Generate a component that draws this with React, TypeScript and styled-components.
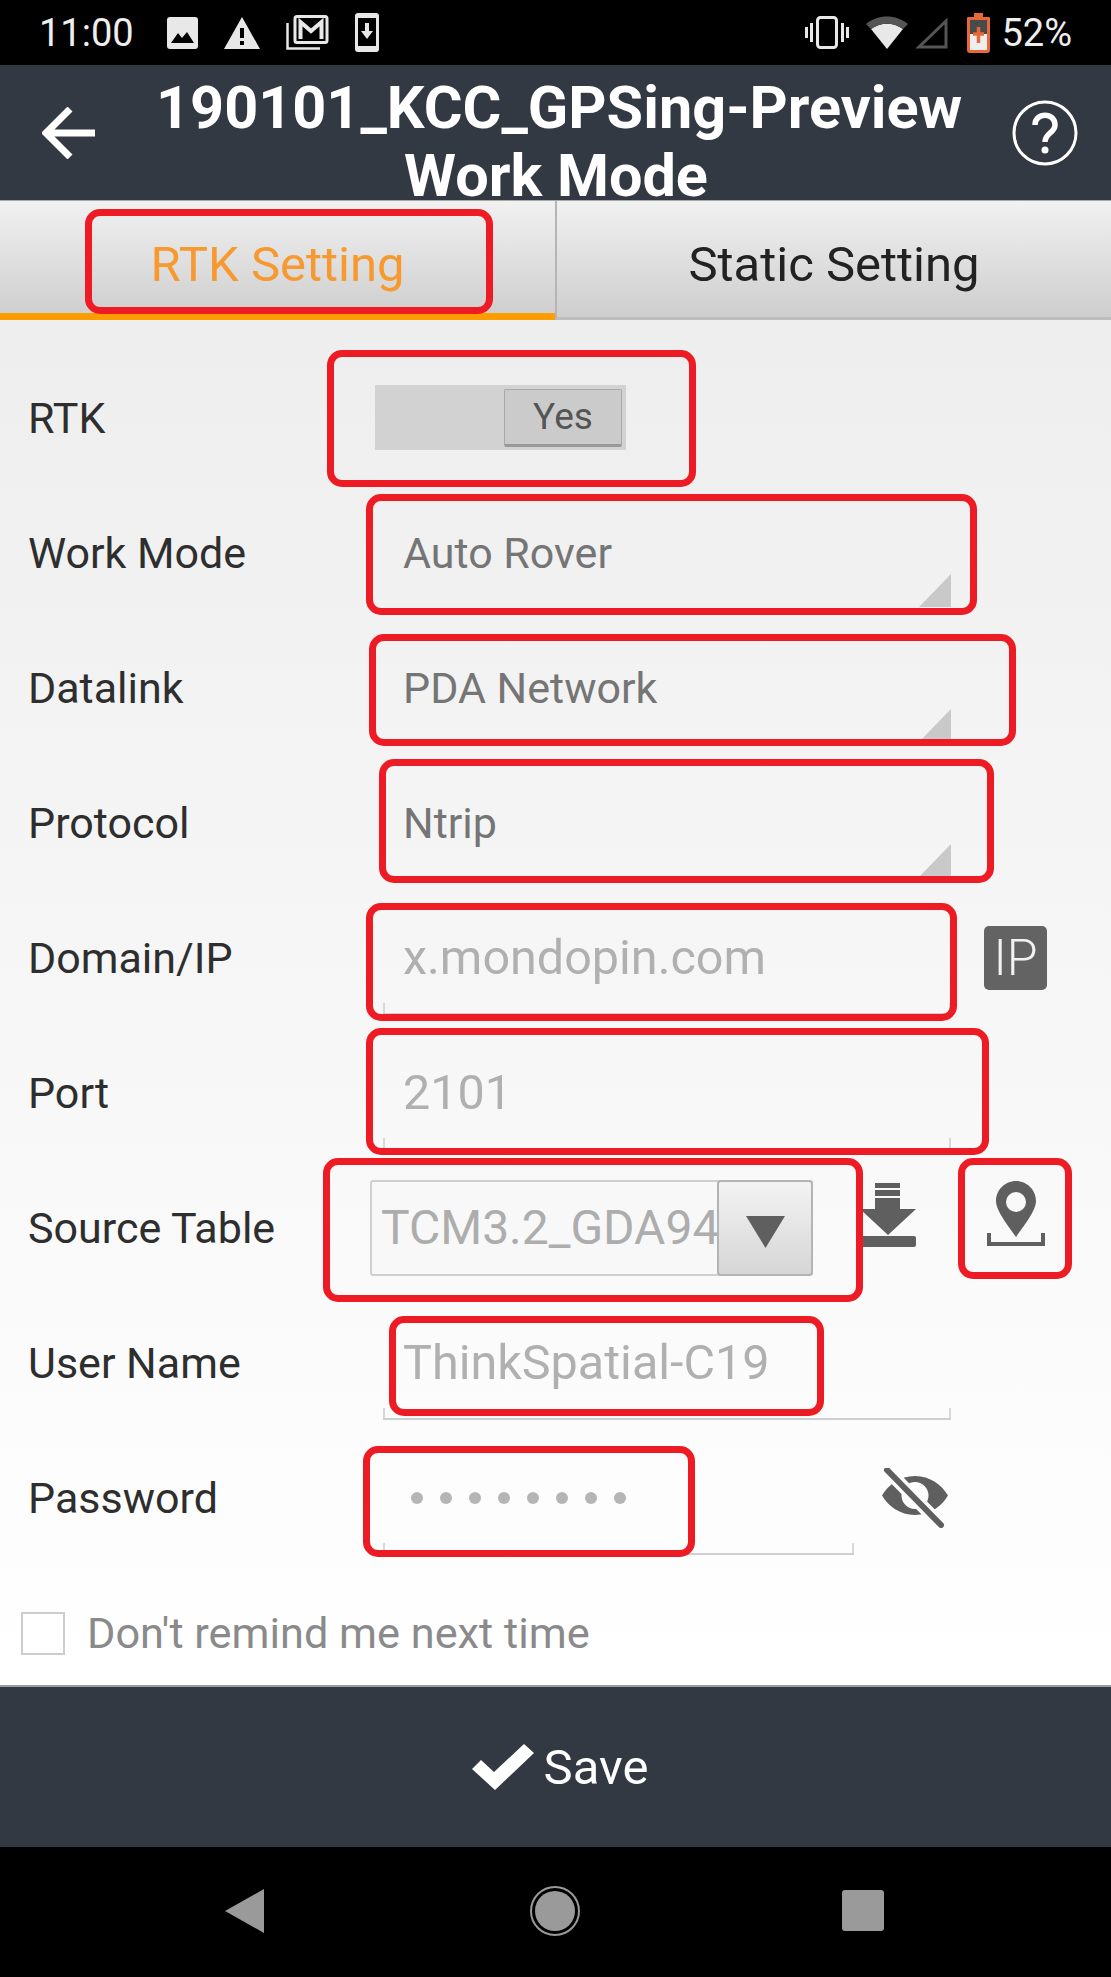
import React from "react";
import styled, { createGlobalStyle } from "styled-components";

const Global = createGlobalStyle`
  html, body { margin: 0; padding: 0; background: #000; }
  body { font-family: Roboto, "Liberation Sans", sans-serif; }
`;

const Page = styled.div`
  position: relative;
  width: 1111px;
  height: 1977px;
  display: flex;
  flex-direction: column;
  overflow: hidden;
`;

const StatusBar = styled.div`
  height: 65px;
  background: #000;
  color: #eee;
  display: flex;
  align-items: center;
  padding: 0 39px;
  font-size: 38px;
  flex: none;
`;
const Clock = styled.span`
  width: 128px;
`;
const StatusGroup = styled.div`
  display: flex;
  align-items: center;
  gap: ${(p: { $gap: number }) => p.$gap}px;
`;
const Spacer = styled.div`
  flex: 1;
`;
const Battery = styled.span`
  margin-left: 11px;
`;

const Header = styled.header`
  height: 135px;
  flex: none;
  background: #333942;
  color: #fff;
  display: grid;
  grid-template-columns: 156px 800px 155px;
  align-items: center;
`;
const BackButton = styled.div`
  padding-left: 42px;
  display: flex;
`;
const HelpButton = styled.div`
  padding-left: 56px;
  display: flex;
`;
const Title = styled.h1`
  margin: 0;
  font-size: 59.4px;
  font-weight: 700;
  line-height: 68px;
  text-align: center;
  white-space: nowrap;
  transform: translateY(9px);
`;

const Tabs = styled.div`
  height: 120px;
  flex: none;
  display: grid;
  grid-template-columns: 555px 556px;
  background: linear-gradient(#f1f1f1, #cdcdcd);
  border-top: 1px solid #a9a9a9;
  box-sizing: border-box;
`;
const Tab = styled.div<{ $active?: boolean }>`
  display: flex;
  align-items: center;
  justify-content: center;
  font-size: 49px;
  box-sizing: border-box;
  padding-top: ${(p) => (p.$active ? 14 : 10)}px;
  color: ${(p) => (p.$active ? "#f7992f" : "#222")};
  border-bottom: ${(p) => (p.$active ? "7px solid #ff9c00" : "3px solid #bdbdbd")};
  border-left: ${(p) => (p.$active ? "none" : "2px solid #b5b5b5")};
`;

const Form = styled.main`
  flex: none;
  height: 1365px;
  background: linear-gradient(#eeeeee, #ffffff);
  display: flex;
  flex-direction: column;
  padding-top: 30px;
  box-sizing: border-box;
`;
const Row = styled.div`
  height: 135px;
  flex: none;
  display: flex;
  align-items: center;
  padding-left: 28px;
`;
const Label = styled.div`
  width: 342px;
  flex: none;
  font-size: 43px;
  color: #2e2e2e;
`;

const Switch = styled.div`
  margin-left: 5px;
  width: 251px;
  height: 65px;
  background: #d2d2d2;
  display: flex;
  justify-content: flex-end;
  align-items: center;
  padding-right: 4px;
  box-sizing: border-box;
`;
const SwitchThumb = styled.div`
  width: 118px;
  height: 58px;
  box-sizing: border-box;
  background: #cbcbcb;
  border: 1px solid #a8a8a8;
  border-bottom: 3px solid #999;
  border-radius: 2px;
  display: flex;
  align-items: center;
  justify-content: center;
  font-size: 37px;
  color: #555;
`;

const Select = styled.div`
  position: relative;
  width: 581px;
  height: 110px;
  display: flex;
  align-items: center;
  padding-left: 33px;
  box-sizing: border-box;
  font-size: 43px;
  color: #757575;
`;
const Corner = styled.svg`
  position: absolute;
  right: 0;
  bottom: 1px;
`;

const Field = styled.div<{ $width: number }>`
  position: relative;
  margin-left: 13px;
  width: ${(p) => p.$width}px;
  height: 114px;
  display: flex;
  align-items: center;
  padding: 2px 0 0 20px;
  box-sizing: border-box;
  font-size: 48.5px;
  color: #b0b0b0;
  flex: none;
  border-bottom: 2px solid #cfcfcf;
  &::before, &::after {
    content: "";
    position: absolute;
    bottom: 0;
    width: 2px;
    height: 10px;
    background: #d8d8d8;
  }
  &::before { left: 0; }
  &::after { right: 0; }
`;
const Dots = styled.div`
  display: flex;
  gap: 17px;
  padding-left: 8px;
`;
const Dot = styled.span`
  width: 12px;
  height: 12px;
  border-radius: 50%;
  background: #b5b5b5;
`;
const IpBadge = styled.div`
  margin-left: 33px;
  width: 63px;
  height: 64px;
  border-radius: 5px;
  background: #636363;
  color: #f2f2f2;
  font-size: 50px;
  font-weight: 300;
  display: flex;
  align-items: center;
  justify-content: center;
  flex: none;
`;
const EyeButton = styled.div`
  margin-left: 28px;
  display: flex;
`;

const Combo = styled.div`
  width: 443px;
  height: 96px;
  flex: none;
  display: flex;
  box-sizing: border-box;
  border: 2px solid #cfcfcf;
  border-radius: 3px;
  background: #f8f8f8;
`;
const ComboText = styled.div`
  flex: 1;
  min-width: 0;
  display: flex;
  align-items: center;
  padding-left: 9px;
  font-size: 48px;
  color: #adadad;
  overflow: hidden;
  white-space: nowrap;
`;
const ComboButton = styled.div`
  width: 96px;
  margin: -2px;
  padding-top: 8px;
  flex: none;
  box-sizing: border-box;
  border: 2px solid #b4b4b4;
  border-radius: 4px;
  background: linear-gradient(#f3f3f3, #d6d6d6);
  display: flex;
  align-items: center;
  justify-content: center;
`;
const SourceIcons = styled.div`
  display: flex;
  align-items: center;
  margin-left: 47px;
  gap: 71px;
  padding-bottom: 28px;
`;

const CheckRow = styled.div`
  flex: 1;
  display: flex;
  align-items: center;
  padding: 17px 0 0 21px;
`;
const Checkbox = styled.div`
  width: 44px;
  height: 43px;
  box-sizing: border-box;
  border: 2px solid #cdcdcd;
  background: #fff;
  flex: none;
`;
const CheckLabel = styled.span`
  margin-left: 22px;
  font-size: 43.3px;
  color: #8a8a8a;
`;

const SaveBar = styled.footer`
  height: 162px;
  flex: none;
  background: #333942;
  border-top: 2px solid #9a9ea3;
  box-sizing: border-box;
  color: #fff;
  display: flex;
  align-items: center;
  justify-content: center;
  gap: 10px;
  font-size: 49px;
  padding-left: 9px;
`;

const NavBar = styled.nav`
  flex: 1;
  background: #000;
  display: flex;
  align-items: center;
  padding: 0 0 3px 225px;
`;
const NavGroup = styled.div`
  display: flex;
  align-items: center;
`;
const NavSquare = styled.div`
  margin-left: 262px;
  width: 42px;
  height: 41px;
  border-radius: 3px;
  background: #9a9a9a;
`;

const Highlight = styled.div<{ $x: number; $y: number; $w: number; $h: number }>`
  position: absolute;
  left: ${(p) => p.$x}px;
  top: ${(p) => p.$y}px;
  width: ${(p) => p.$w}px;
  height: ${(p) => p.$h}px;
  box-sizing: border-box;
  border: 7px solid #ed1c24;
  border-radius: 15px;
  pointer-events: none;
`;

const highlights = [
  [85, 209, 408, 105],
  [327, 350, 369, 137],
  [366, 494, 611, 121],
  [369, 634, 647, 112],
  [379, 759, 615, 124],
  [366, 903, 591, 118],
  [366, 1028, 623, 127],
  [323, 1158, 540, 144],
  [958, 1158, 114, 121],
  [389, 1316, 435, 100],
  [363, 1446, 332, 111],
];

const CornerMark = () => (
  <Corner width="32" height="33" viewBox="0 0 32 33">
    <path d="M0 33 L32 0 V33 Z" fill="#c9c9c9" />
  </Corner>
);

const dots = [0, 1, 2, 3, 4, 5, 6, 7];

export default function App() {
  return (
    <Page>
      <Global />
      <StatusBar>
        <Clock>11:00</Clock>
        <StatusGroup $gap={26}>
          <svg width="31" height="32" viewBox="0 0 31 32">
            <rect width="31" height="32" rx="3" fill="#e8e8e8" />
            <path d="M4 26 L11 16 L15 21 L20 15 L27 26 Z" fill="#000" />
          </svg>
          <svg width="36" height="32" viewBox="0 0 36 32">
            <path d="M18 0 L36 32 H0 Z" fill="#e8e8e8" />
            <rect x="16" y="11" width="4" height="10" fill="#000" />
            <rect x="16" y="24" width="4" height="4" fill="#000" />
          </svg>
          <svg width="43" height="35" viewBox="0 0 43 35">
            <rect x="9" y="1.500" width="32" height="26" rx="2" fill="none" stroke="#e8e8e8" strokeWidth="3" />
            <path d="M14.500 24 V7 L25 16 L35.500 7 V24" fill="none" stroke="#e8e8e8" strokeWidth="4" />
            <path d="M1.500 8 V33.500 H34" fill="none" stroke="#e8e8e8" strokeWidth="2.500" />
          </svg>
          <svg width="24" height="39" viewBox="0 0 24 39">
            <rect width="24" height="39" rx="3" fill="#e8e8e8" />
            <rect x="3" y="5" width="18" height="28" fill="#000" />
            <path d="M10 10 H14 V18 H18 L12 26 L6 18 H10 Z" fill="#e8e8e8" />
          </svg>
        </StatusGroup>
        <Spacer />
        <StatusGroup $gap={6}>
          <svg width="44" height="33" viewBox="0 0 44 33">
            <rect x="12.500" y="1.500" width="19" height="30" rx="3" fill="none" stroke="#e8e8e8" strokeWidth="3" />
            <path d="M6.500 7 V26 M1.500 11 V22 M37.500 7 V26 M42.500 11 V22" stroke="#e8e8e8" strokeWidth="3" />
          </svg>
          <svg width="42" height="33" viewBox="0 0 42 33" style={{ marginLeft: 11 }}>
            <path d="M21 33 L5 13 C15 6 27 6 37 13 Z" fill="#e8e8e8" />
            <path d="M0 8 C12 -2 30 -2 42 8 L37 13 C27 6 15 6 5 13 Z" fill="#555" />
          </svg>
          <svg width="33" height="32" viewBox="0 0 33 32" style={{ marginLeft: 1 }}>
            <path d="M31 4 V30 H4 Z" fill="none" stroke="#555" strokeWidth="3" />
          </svg>
          <svg width="23" height="40" viewBox="0 0 23 40" style={{ marginLeft: 13 }}>
            <path d="M7 0 H16 V4 H22 A1 1 0 0 1 23 5 V37 A3 3 0 0 1 20 40 H3 A3 3 0 0 1 0 37 V5 A1 1 0 0 1 1 4 H7 Z" fill="#e8683a" />
            <rect x="3" y="7" width="17" height="14" fill="#4a4a4a" />
            <rect x="3" y="21" width="17" height="16" fill="#eeeeee" />
            <path d="M11.500 14 V30 M6 21 H17" stroke="#e8683a" strokeWidth="3.500" />
          </svg>
        </StatusGroup>
        <Battery>52%</Battery>
      </StatusBar>

      <Header>
        <BackButton>
          <svg width="53" height="52" viewBox="0 0 53 52">
            <path d="M53 26 H6 M28 2 L4 26 L28 50" fill="none" stroke="#fff" strokeWidth="7" />
          </svg>
        </BackButton>
        <Title>
          190101_KCC_GPSing-Preview
          <br />
          Work Mode
        </Title>
        <HelpButton>
          <svg width="66" height="66" viewBox="0 0 66 66">
            <circle cx="33" cy="33" r="31" fill="none" stroke="#fff" strokeWidth="3" />
            <path d="M23 25 C23 12 43 12 43 25 C43 33 33 33 33 42" fill="none" stroke="#fff" strokeWidth="5.500" />
            <circle cx="33" cy="50" r="3.500" fill="#fff" />
          </svg>
        </HelpButton>
      </Header>

      <Tabs>
        <Tab $active>RTK Setting</Tab>
        <Tab>Static Setting</Tab>
      </Tabs>

      <Form>
        <Row>
          <Label>RTK</Label>
          <Switch>
            <SwitchThumb>Yes</SwitchThumb>
          </Switch>
        </Row>
        <Row>
          <Label>Work Mode</Label>
          <Select>
            Auto Rover
            <CornerMark />
          </Select>
        </Row>
        <Row>
          <Label>Datalink</Label>
          <Select>
            PDA Network
            <CornerMark />
          </Select>
        </Row>
        <Row>
          <Label>Protocol</Label>
          <Select>
            Ntrip
            <CornerMark />
          </Select>
        </Row>
        <Row>
          <Label>Domain/IP</Label>
          <Field $width={568}>x.mondopin.com</Field>
          <IpBadge>IP</IpBadge>
        </Row>
        <Row>
          <Label>Port</Label>
          <Field $width={568}>2101</Field>
        </Row>
        <Row>
          <Label>Source Table</Label>
          <Combo>
            <ComboText>TCM3.2_GDA94</ComboText>
            <ComboButton>
              <svg width="39" height="32" viewBox="0 0 39 32">
                <path d="M0 0 H39 L19.500 32 Z" fill="#5f5f5f" />
              </svg>
            </ComboButton>
          </Combo>
          <SourceIcons>
            <svg width="56" height="66" viewBox="0 0 56 66">
              <path d="M15 2 H40 V7 H15 Z M15 9 H40 V15 H15 Z M15 17 H40 V28 H56 L28 54 L0 28 H15 Z" fill="#5f5f5f" />
              <rect y="55" width="56" height="11" rx="2" fill="#5f5f5f" />
            </svg>
            <svg width="58" height="65" viewBox="0 0 58 65">
              <path
                fillRule="evenodd"
                d="M29 0 C40 0 49 9 49 20 C49 30 36 46 29 56 C22 46 9 30 9 20 C9 9 18 0 29 0 Z M29 11 A10 10 0 1 0 29 31 A10 10 0 1 0 29 11 Z"
                fill="#5f5f5f"
              />
              <path d="M2 52 V63 H56 V52" fill="none" stroke="#5f5f5f" strokeWidth="4" />
            </svg>
          </SourceIcons>
        </Row>
        <Row>
          <Label>User Name</Label>
          <Field $width={568}>ThinkSpatial-C19</Field>
        </Row>
        <Row>
          <Label>Password</Label>
          <Field $width={471}>
            <Dots>
              {dots.map((d) => (
                <Dot key={d} />
              ))}
            </Dots>
          </Field>
          <EyeButton>
            <svg width="66" height="60" viewBox="0 0 66 60">
              <path
                fillRule="evenodd"
                d="M33 8 C48 8 60 17 66 27.500 C60 38 48 47 33 47 C18 47 6 38 0 27.500 C6 17 18 8 33 8 Z M33 14 A13.500 13.500 0 1 0 33 41 A13.500 13.500 0 1 0 33 14 Z"
                fill="#5f5f5f"
              />
              <path d="M5 2 L59 57" stroke="#fdfdfd" strokeWidth="13" />
              <path d="M5 2 L59 57" stroke="#5f5f5f" strokeWidth="6" strokeLinecap="round" />
            </svg>
          </EyeButton>
        </Row>
        <CheckRow>
          <Checkbox />
          <CheckLabel>Don't remind me next time</CheckLabel>
        </CheckRow>
      </Form>

      <SaveBar>
        <svg width="62" height="46" viewBox="0 0 62 46">
          <path d="M0 25 L9 16 L22 28 L52 0 L62 9 L23 46 Z" fill="#fff" />
        </svg>
        Save
      </SaveBar>

      <NavBar>
        <NavGroup>
          <svg width="39" height="44" viewBox="0 0 39 44">
            <path d="M39 0 V44 L0 22 Z" fill="#9a9a9a" />
          </svg>
          <svg width="50" height="50" viewBox="0 0 50 50" style={{ marginLeft: 266 }}>
            <circle cx="25" cy="25" r="24" fill="none" stroke="#9a9a9a" strokeWidth="2" />
            <circle cx="25" cy="25" r="20" fill="#9a9a9a" />
          </svg>
          <NavSquare />
        </NavGroup>
      </NavBar>

      {highlights.map(([x, y, w, h]) => (
        <Highlight key={`${x}-${y}`} $x={x} $y={y} $w={w} $h={h} />
      ))}
    </Page>
  );
}
